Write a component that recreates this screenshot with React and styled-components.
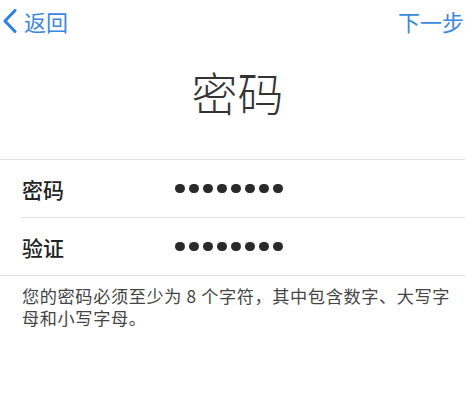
import React from "react";
import styled, { createGlobalStyle } from "styled-components";

const GlobalStyle = createGlobalStyle`
  html, body {
    margin: 0;
    padding: 0;
    background: #fff;
  }
  body {
    font-family: "Noto Sans CJK SC", "Noto Sans", sans-serif;
    -webkit-font-smoothing: antialiased;
  }
`;

const Screen = styled.div`
  width: 465px;
  height: 420px;
  background: #fff;
  overflow: hidden;
`;

const NavBar = styled.nav`
  display: flex;
  align-items: center;
  justify-content: space-between;
  height: 42px;
  padding: 0 1px 0 2px;
`;

const NavButton = styled.button`
  display: flex;
  align-items: center;
  gap: 7px;
  border: 0;
  background: none;
  padding: 0;
  font-family: inherit;
  font-size: 22px;
  color: #3c87de;
  cursor: pointer;
`;

const Title = styled.h1`
  margin: 26px 0 0;
  height: 91px;
  text-align: center;
  font-size: 46px;
  font-weight: 300;
  color: #333;
  line-height: 46px;
  padding-left: 10px;
`;

const Form = styled.section`
  border-top: 1px solid #e0e0e0;
  border-bottom: 1px solid #e0e0e0;
`;

const Row = styled.div`
  display: flex;
  align-items: center;
  height: 57px;
  margin-left: ${p => (p.$inset ? "20px" : "0")};
  padding-left: ${p => (p.$inset ? "2px" : "22px")};
  border-top: ${p => (p.$inset ? "1px solid #e0e0e0" : "0")};
`;

const Label = styled.span`
  width: 153px;
  font-size: 21px;
  font-weight: 500;
  color: #222;
`;

const Dots = styled.span`
  display: flex;
  gap: 4.5px;
`;

const Dot = styled.i`
  width: 9.5px;
  height: 9.5px;
  border-radius: 50%;
  background: #2a2a2a;
`;

const Hint = styled.p`
  margin: 9px 0 0;
  padding: 0 10px 0 22px;
  font-size: 17.2px;
  letter-spacing: 0.6px;
  line-height: 22px;
  color: #444;
`;

const Chevron = () => (
  <svg width="15" height="24" viewBox="0 0 15 24">
    <path
      d="M13 1.5 L3 12 L13 22.5"
      fill="none"
      stroke="#2f7fdf"
      strokeWidth="3"
      strokeLinecap="round"
      strokeLinejoin="round"
    />
  </svg>
);

const Masked = ({ count = 8 }) => (
  <Dots>
    {Array.from({ length: count }, (_, i) => (
      <Dot key={i} />
    ))}
  </Dots>
);

const App = () => (
  <Screen>
    <GlobalStyle />
    <NavBar>
      <NavButton>
        <Chevron />
        返回
      </NavButton>
      <NavButton>下一步</NavButton>
    </NavBar>
    <Title>密码</Title>
    <Form>
      <Row>
        <Label>密码</Label>
        <Masked />
      </Row>
      <Row $inset>
        <Label>验证</Label>
        <Masked />
      </Row>
    </Form>
    <Hint>您的密码必须至少为 8 个字符，其中包含数字、大写字母和小写字母。</Hint>
  </Screen>
);

export default App;
